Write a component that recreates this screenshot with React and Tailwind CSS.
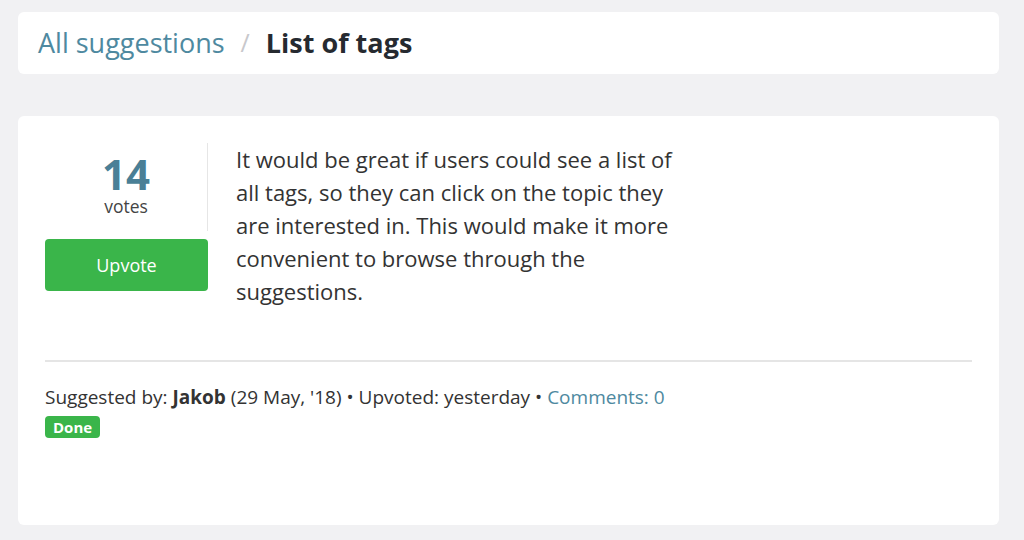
import React from "react";

function App() {
  return (
    <div
      className="min-h-[540px] bg-[#f1f1f3] pt-3 pr-[25px] pb-4 pl-[18px] text-[#333]"
      style={{ fontFamily: '"Open Sans", sans-serif' }}
    >
      <div className="flex h-[62px] items-center gap-4 rounded-md bg-white px-5">
        <a className="text-[27px] font-normal text-[#4e89a0]">All suggestions</a>
        <span className="text-[25px] text-[#c8c8cc]">/</span>
        <h1 className="text-[27px] font-bold text-[#262a30]">List of tags</h1>
      </div>

      <div className="mt-[42px] h-[409px] rounded-md bg-white px-[27px] pt-[27px]">
        <div className="flex">
          <div className="flex w-[163px] flex-col">
            <div className="flex h-[88px] flex-col items-center border-r border-[#e6e6e6] pt-[12px]">
              <div className="text-[42px] leading-[38px] font-bold text-[#4a7f96]">14</div>
              <div className="mt-[3px] text-[17.5px] leading-[20px] text-[#444]">votes</div>
            </div>
            <button className="mt-[8px] h-[52px] rounded-sm bg-[#3ab54a] text-[18px] text-white">
              Upvote
            </button>
          </div>
          <p className="ml-7 max-w-[450px] text-[22px] leading-[33px] text-[#333]">
            It would be great if users could see a list of all tags, so they can click on
            the topic they are interested in. This would make it more convenient to browse
            through the suggestions.
          </p>
        </div>

        <div className="mt-[52px] border-t-2 border-[#e5e5e5]"></div>

        <div className="mt-[23px] text-[19px] leading-6 text-[#333]">
          Suggested by: <b className="font-bold">Jakob</b> (29 May, '18) • Upvoted: yesterday •{" "}
          <a className="text-[#4e89a0]">Comments: 0</a>
        </div>
        <span className="mt-[7px] inline-block rounded-sm bg-[#3ab54a] px-2 text-[15px] leading-[22px] font-bold text-white">
          Done
        </span>
      </div>
    </div>
  );
}

export default App;
